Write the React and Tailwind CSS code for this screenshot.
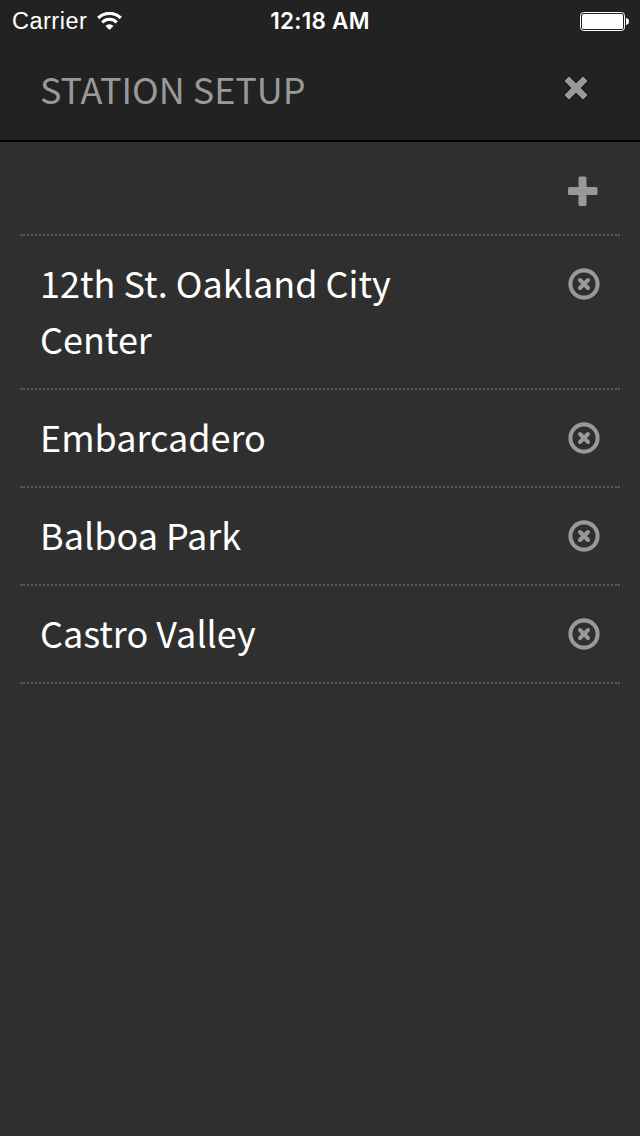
const stations = ['12th St. Oakland City Center', 'Embarcadero', 'Balboa Park', 'Castro Valley'];

function StatusBar() {
  return (
    <div className="grid h-10 grid-cols-3 items-center pl-3 pr-[11px] font-['Liberation_Sans',sans-serif] text-[23.5px] leading-10 text-white">
      <div className="flex items-center gap-[10px]">
        <span className="tracking-[0.5px]">Carrier</span>
        <svg className="h-[18px] w-[25px]" viewBox="0 0 25 18" fill="none" stroke="currentColor">
          <path d="M1.2 6a16 16 0 0 1 22.6 0" strokeWidth="3.200" />
          <path d="M5.2 10.400a10.300 10.300 0 0 1 14.600 0" strokeWidth="3" />
          <path d="M12.500 18L8.500 14a5.700 5.700 0 0 1 8 0z" fill="currentColor" stroke="none" />
        </svg>
      </div>
      <span className="-ml-px pt-px text-center font-['Inter',sans-serif] text-[22.5px] font-semibold tracking-[0.25px]">12:18 AM</span>
      <svg className="h-5 w-[49px] justify-self-end" viewBox="0 0 49 20">
        <rect x="0.5" y="1.5" width="44" height="18" rx="3" fill="none" stroke="white" />
        <rect x="2" y="3" width="41" height="15" rx="1.5" fill="white" />
        <path d="M46 7c2 .3 3 1.500 3 3.500s-1 3.200-3 3.500z" fill="white" />
      </svg>
    </div>
  );
}

function CloseIcon() {
  return (
    <svg className="h-6 w-6" viewBox="0 0 24 24" fill="currentColor" stroke="currentColor" strokeWidth="1" strokeLinejoin="round">
      <path d="M5 1L12 8L19 1L23 5L16 12L23 19L19 23L12 16L5 23L1 19L8 12L1 5Z" />
    </svg>
  );
}

function PlusIcon() {
  return (
    <svg className="h-[30px] w-[30px]" viewBox="0 0 30 30" fill="currentColor">
      <rect x="10.5" y="0.5" width="8" height="29.5" rx="1.5" />
      <rect x="0" y="11" width="29.5" height="8" rx="1.5" />
    </svg>
  );
}

function RemoveIcon() {
  return (
    <svg className="h-8 w-8" viewBox="0 0 32 32" fill="none" stroke="currentColor">
      <circle cx="16" cy="16" r="13.6" strokeWidth="4.100" />
      <path d="M12 12L20 20M20 12L12 20" strokeWidth="4" strokeLinecap="round" />
    </svg>
  );
}

export default function App() {
  return (
    <div className="min-h-[1136px] w-[640px] bg-[#2f2f2f] font-['Noto_Sans_CJK_SC',sans-serif] text-[36px] text-white">
      <header className="h-[142px] border-b-2 border-black bg-[#222222]">
        <StatusBar />
        <div className="flex h-[100px] items-start justify-between pl-10 pr-[52px] text-[#999999]">
          <h1 className="pt-5 leading-[56px] tracking-[-0.06px]">STATION SETUP</h1>
          <button aria-label="Close" className="mt-9">
            <CloseIcon />
          </button>
        </div>
      </header>
      <main className="px-5">
        <div className="flex h-[94px] justify-end border-b-2 border-dotted border-[#5a5a5a] pr-[22px] pt-[34px] text-[#999999]">
          <button aria-label="Add station" className="h-[30px]">
            <PlusIcon />
          </button>
        </div>
        <ul>
          {stations.map((name) => (
            <li
              key={name}
              className="flex items-start justify-between border-b-2 border-dotted border-[#5a5a5a] px-5 pb-[22px] pt-[18px]"
            >
              <span className="w-[400px] leading-[56px]">{name}</span>
              <button aria-label={`Remove ${name}`} className="mt-[14px] text-[#999999]">
                <RemoveIcon />
              </button>
            </li>
          ))}
        </ul>
      </main>
    </div>
  );
}
